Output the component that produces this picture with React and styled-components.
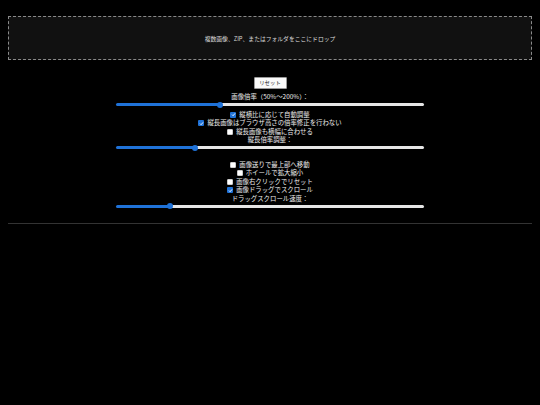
import React, { useState } from 'react'
import styled, { createGlobalStyle } from 'styled-components'

const GlobalStyle = createGlobalStyle`
  html, body {
    background: #000;
  }
  body {
    margin: 8px;
    color: #eee;
    font-family: 'Noto Sans CJK JP', 'Noto Sans', sans-serif;
  }
`

const DropZone = styled.div`
  margin-top: 8px;
  height: 44px;
  box-sizing: border-box;
  border: 1px dashed #8a8a8a;
  background: #111;
  display: flex;
  align-items: center;
  justify-content: center;
  color: #d8d8d8;
  font-size: 5.8px;
`

const Controls = styled.div`
  display: flex;
  flex-direction: column;
  align-items: center;
  padding-top: 17px;
`

const ResetButton = styled.button`
  width: 33px;
  height: 12px;
  padding: 0;
  border: 1px solid #999;
  border-radius: 1px;
  background: #fafafa;
  color: #222;
  font-family: inherit;
  font-size: 5.4px;
  margin-bottom: 4px;
`

const Group = styled.div`
  display: flex;
  flex-direction: column;
  align-items: center;
  margin-top: ${p => p.$gap || 0}px;
`

const Line = styled.label`
  display: flex;
  align-items: center;
  height: 8.5px;
  font-size: 6.4px;
  line-height: 8.5px;
  color: #eee;
  white-space: nowrap;
`

const Box = styled.span`
  display: inline-flex;
  align-items: center;
  justify-content: center;
  width: 6px;
  height: 6px;
  margin-right: 3px;
  border-radius: 1px;
  background: ${p => (p.$on ? '#1f72d8' : '#fff')};
  box-sizing: border-box;
  border: ${p => (p.$on ? 'none' : '0.5px solid #ccc')};
`

const Range = styled.input.attrs({ type: 'range' })`
  -webkit-appearance: none;
  appearance: none;
  width: 308px;
  height: 6px;
  margin: 0 0 3px;
  background: transparent;

  &::-webkit-slider-runnable-track {
    height: 3px;
    border-radius: 2px;
    background: linear-gradient(
      to right,
      #1f72d8 0%,
      #1f72d8 var(--pct),
      #e6e6e6 var(--pct),
      #e6e6e6 100%
    );
  }

  &::-webkit-slider-thumb {
    -webkit-appearance: none;
    width: 6px;
    height: 6px;
    margin-top: -1.5px;
    border-radius: 50%;
    background: #1f72d8;
  }
`

const Rule = styled.hr`
  margin: 11px 0 0;
  border: none;
  border-top: 1px solid #333;
`

const Slider = ({ min, max, value }) => {
  const [v, setV] = useState(value)
  const pct = ((v - min) / (max - min)) * 100
  return (
    <Range
      min={min}
      max={max}
      value={v}
      onChange={e => setV(Number(e.target.value))}
      style={{ '--pct': `${pct}%` }}
    />
  )
}

const Check = ({ label, checked }) => {
  const [on, setOn] = useState(!!checked)
  return (
    <Line onClick={() => setOn(!on)}>
      <Box $on={on}>
        {on && (
          <svg width="5" height="5" viewBox="0 0 10 10">
            <path d="M2 5.2 L4.2 7.4 L8 2.8" fill="none" stroke="#fff" strokeWidth="1.8" />
          </svg>
        )}
      </Box>
      {label}
    </Line>
  )
}

const App = () => (
  <>
    <GlobalStyle />
    <DropZone>複数画像、ZIP、またはフォルダをここにドロップ</DropZone>
    <Controls>
      <ResetButton>リセット</ResetButton>
      <Group>
        <Line>画像倍率（50%～200%）：</Line>
        <Slider min={50} max={200} value={100} />
      </Group>
      <Group>
        <Check label="縦横比に応じて自動調整" checked />
        <Check label="縦長画像はブラウザ高さの倍率修正を行わない" checked />
        <Check label="縦長画像も横幅に合わせる" />
        <Line>縦長倍率調整：</Line>
        <Slider min={0} max={100} value={25} />
      </Group>
      <Group $gap={7}>
        <Check label="画像送りで最上部へ移動" />
        <Check label="ホイールで拡大縮小" />
        <Check label="画像右クリックでリセット" />
        <Check label="画像ドラッグでスクロール" checked />
        <Line>ドラッグスクロール速度：</Line>
        <Slider min={0} max={100} value={17} />
      </Group>
    </Controls>
    <Rule />
  </>
)

export default App
